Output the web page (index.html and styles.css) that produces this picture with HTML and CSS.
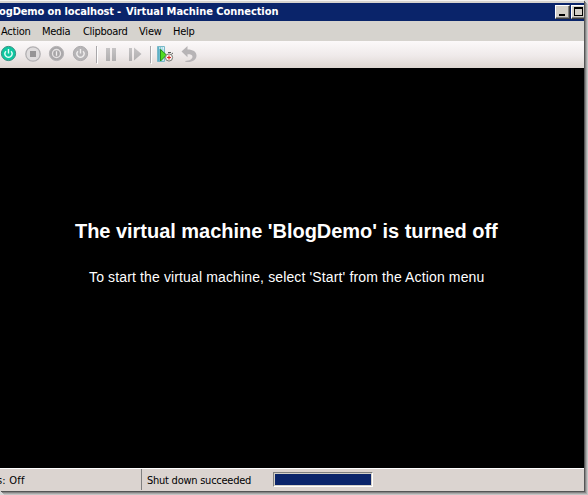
FILE: index.html
```
<!DOCTYPE html>
<html lang="en">
<head>
<meta charset="utf-8">
<title>BlogDemo on localhost - Virtual Machine Connection</title>
<link rel="stylesheet" href="styles.css">
</head>
<body>
<div class="window">
  <header class="titlebar">
    <div class="title"><span class="t-name">ogDemo on localhost</span><span class="t-dash">-</span><span class="t-app">Virtual Machine Connection</span></div>
    <div class="controls"><button class="ctl" aria-label="Minimize"><i class="min"></i></button><button class="ctl" aria-label="Maximize"><i class="max"></i></button></div>
  </header>
  <nav class="menu">
    <span class="m-action">Action</span><span class="m-media">Media</span><span class="m-clip">Clipboard</span><span class="m-view">View</span><span class="m-help">Help</span>
  </nav>
  <div class="toolbar">
    <svg width="210" height="27" viewBox="0 41 210 27">
      <defs>
        <linearGradient id="page" x1="0" x2="1"><stop offset="0" stop-color="#4aa6c0"/><stop offset="1" stop-color="#d4f0f4"/></linearGradient>
        <linearGradient id="grey" x1="0" x2="0" y1="0" y2="1"><stop offset="0" stop-color="#c6c4c5"/><stop offset="1" stop-color="#b0aeaf"/></linearGradient>
      </defs>
      <circle cx="8.5" cy="53.5" r="7.1" fill="#0fc7a1" stroke="#338f80"/>
      <path d="M6 51.2a3.5 3.5 0 1 0 5 0M8.5 49v4.5" fill="none" stroke="#e4fff8" stroke-width="1.4"/>
      <circle cx="33" cy="54" r="7.2" fill="#dfdcdd" stroke="#b2b0b2" stroke-width="1.3"/>
      <rect x="30" y="51" width="6" height="6" fill="#969496"/>
      <circle cx="56.5" cy="53.5" r="7.1" fill="#aaa8aa" stroke="#b5b3b5"/>
      <circle cx="56.5" cy="53.5" r="4" fill="#a8a6a8" stroke="#e6e3e4" stroke-width="1.3"/>
      <path d="M56.5 51.2v4.6" stroke="#f0eeee" stroke-width="1.3"/>
      <circle cx="80.5" cy="53.5" r="7.1" fill="#b7b5b7" stroke="#aaa8aa"/>
      <path d="M78 51.2a3.5 3.5 0 1 0 5 0M80.5 49v4.5" fill="none" stroke="#f0eeee" stroke-width="1.4"/>
      <path d="M96.5 46v17M150.5 46v17" stroke="#a9a7aa"/><path d="M97.5 47v17M151.5 47v17" stroke="#fff"/>
      <path d="M106 48h4v13h-4zM112 48h4v13h-4z" fill="url(#grey)"/>
      <path d="M129 48h3v13h-3zM134 47.5l7.5 6.5-7.5 6.5z" fill="url(#grey)"/>
      <path d="M157.5 46.5h7v15h-7z" fill="url(#page)" stroke="#78b8c8"/>
      <path d="M159 48h5" stroke="#fff" stroke-dasharray="1 1"/>
      <path d="M160.5 49.5l6 5.5-6 6z" fill="#52dc21" stroke="#248f18"/>
      <circle cx="169" cy="57.5" r="3.6" fill="#f5f1ec" stroke="#777873"/>
      <path d="M168 52.5h3M171.5 54l1.5-1" stroke="#565b56"/>
      <path d="M167 57.5h4M169 55.5v4" stroke="#e02424" stroke-width="1.2"/>
      <path d="M181.500 51.500l6-5.500v3.500c5.500 0 9 2.200 9 6 0 4-3.500 6.500-8.500 6.500-1.800 0-3-.4-3-1 4.500-.2 7.500-1.900 7.500-4.200 0-1.900-2-2.500-5-2.500v3z" fill="#b7b4b6"/>
    </svg>
  </div>
  <main class="screen">
    <h1>The virtual machine 'BlogDemo' is turned off</h1>
    <p>To start the virtual machine, select 'Start' from the Action menu</p>
  </main>
  <footer class="status">
    <div class="state">s: Off</div>
    <div class="message">Shut down succeeded</div>
    <div class="progress"></div>
  </footer>
</div>
</body>
</html>
```
FILE: styles.css
```
* { box-sizing: border-box; }
body {
  margin: 0;
  width: 588px;
  height: 495px;
  overflow: hidden;
  background: #d8d8d8;
  font: 11px/14px "DejaVu Sans Condensed", "DejaVu Sans", sans-serif;
  color: #000;
}
.window {
  width: 584px;
  height: 491px;
  display: flex;
  flex-direction: column;
  border-top: 1px solid #f4f3f1;
  background: #d6d3ce;
  padding-top: 2px;
  box-shadow: 1px 1px #555, 2px 2px #858585, 3px 3px #a8a8a8, 4px 4px #c4c4c4;
}
.titlebar {
  height: 18px;
  flex: none;
  background: #0a246a;
  color: #fff;
  font-weight: bold;
  display: flex;
  justify-content: space-between;
  overflow: hidden;
}
.title { display: flex; padding-top: 2px; white-space: nowrap; }
.t-name { width: 118px; letter-spacing: -.12px; margin-left: -1px; }
.t-dash { width: 9px; }
.t-app { letter-spacing: -.05px; }
.controls { display: flex; gap: 1px; padding-top: 2px; width: 29px; overflow: hidden; }
.ctl {
  flex: none;
  width: 15px;
  height: 14px;
  padding: 0;
  border: 1px solid;
  border-color: #fff #404040 #404040 #fff;
  background: #d4d0c8;
  box-shadow: inset -1px -1px #808080;
  display: flex;
}
.min { width: 6px; height: 2px; background: #000; margin: 8px 0 0 3px; }
.max { width: 9px; height: 9px; border: 1px solid #000; border-top-width: 2px; margin: 1px 0 0 2px; }
.menu { height: 20px; flex: none; display: flex; padding: 4px 0 0 1px; white-space: nowrap; }
.m-action { width: 41px; letter-spacing: -.25px; }
.m-media { width: 41px; letter-spacing: -.3px; }
.m-clip { width: 56px; letter-spacing: -.3px; }
.m-view { width: 34px; letter-spacing: -.2px; }
.m-help { letter-spacing: -.3px; }
.toolbar { height: 27px; flex: none; background: linear-gradient(#fcf9fa, #efeaea 55%, #ddd6d1); }
.toolbar svg { display: block; }
.screen {
  height: 400px;
  flex: none;
  background: #000;
  color: #fff;
  font-family: "Liberation Sans", Arial, sans-serif;
  padding-top: 150px;
  white-space: nowrap;
}
h1 { margin: 0 0 0 75px; font-size: 20px; line-height: 26px; letter-spacing: -.03px; }
p { margin: 24px 0 0 89px; font-size: 14px; line-height: 18px; letter-spacing: .135px; }
.status {
  height: 23px;
  flex: none;
  border-top: 1px solid #fff;
  background: #dbd4d0;
  display: flex;
}
.state { width: 142px; height: 21px; border-right: 1px solid #808080; padding-top: 5px; text-indent: -3px; letter-spacing: .2px; }
.message { width: 131px; padding: 5px 0 0 5px; letter-spacing: -.25px; white-space: nowrap; }
.progress {
  width: 100px;
  height: 15px;
  margin-top: 3px;
  border: 1px solid;
  border-color: #808080 #fff #fff #808080;
  background: #0a246a;
  box-shadow: inset 0 0 0 1px #d4d0c8;
}
```
